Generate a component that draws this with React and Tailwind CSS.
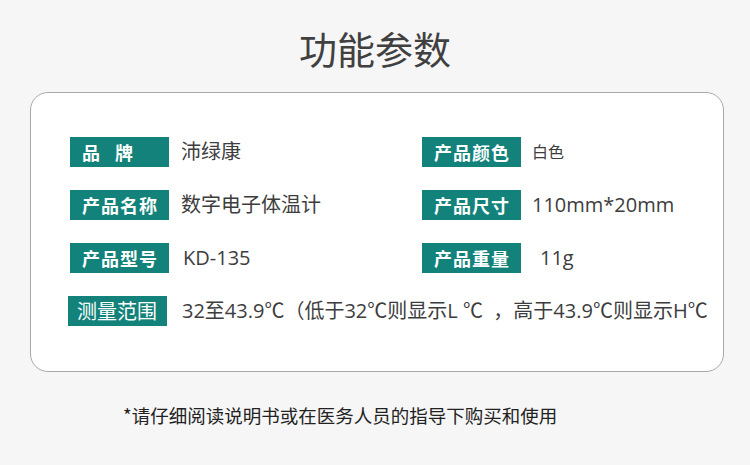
const FONT = { fontFamily: '"Noto Sans CJK SC", "Noto Sans", sans-serif' };
const VALUE_FONT = { fontFamily: '"Open Sans", "Noto Sans CJK SC", sans-serif' };

function Label({ children, className = '' }) {
  return (
    <div
      className={`flex h-[30px] w-[99px] shrink-0 items-center bg-[#12827b] text-white ${className}`}
    >
      {children}
    </div>
  );
}

function Item({ label, value, valueClass = 'ml-[12px] text-[20px]' }) {
  return (
    <div className="flex items-center">
      <Label className="pl-[12px] text-[18px] font-bold tracking-[1px]">{label}</Label>
      <span className={`text-[#3d3d3d] ${valueClass}`} style={VALUE_FONT}>
        {value}
      </span>
    </div>
  );
}

export default function App() {
  return (
    <div className="h-[465px] w-[750px] bg-[#f6f6f6]" style={FONT}>
      {/* Title */}
      <div className="pt-[24px] text-center text-[38px] leading-[48px] text-[#404040]">功能参数</div>

      {/* Spec card */}
      <div className="ml-[30px] mt-[20px] h-[280px] w-[694px] rounded-[18px] border border-[#a8a8a8] bg-white pl-[39px] pt-[44px]">
        <div className="grid grid-cols-[352px_1fr] gap-y-[23px]">
          <Item
            label={
              <span className="flex gap-[14px]">
                <span>品</span>
                <span>牌</span>
              </span>
            }
            value="沛绿康"
          />
          <Item label="产品颜色" value="白色" valueClass="ml-[11px] text-[16px]" />
          <Item label="产品名称" value="数字电子体温计" />
          <Item label="产品尺寸" value="110mm*20mm" valueClass="ml-[11px] text-[20px]" />
          <Item label="产品型号" value="KD-135" valueClass="ml-[14px] text-[20px]" />
          <Item label="产品重量" value="11g" valueClass="ml-[19px] text-[20px]" />
          <div className="col-span-2 -ml-[2px] flex items-center">
            <Label className="pl-[9px] text-[20px]">测量范围</Label>
            <span className="ml-[15px] whitespace-pre text-[20px] text-[#3d3d3d]" style={VALUE_FONT}>
              32至43.9℃（低于32℃则显示L ℃  ，高于43.9℃则显示H℃
            </span>
          </div>
        </div>
      </div>

      {/* Footer note */}
      <div className="mt-[31px] pl-[123px] text-[18.5px] leading-[24px] text-[#222]">
        *请仔细阅读说明书或在医务人员的指导下购买和使用
      </div>
    </div>
  );
}
